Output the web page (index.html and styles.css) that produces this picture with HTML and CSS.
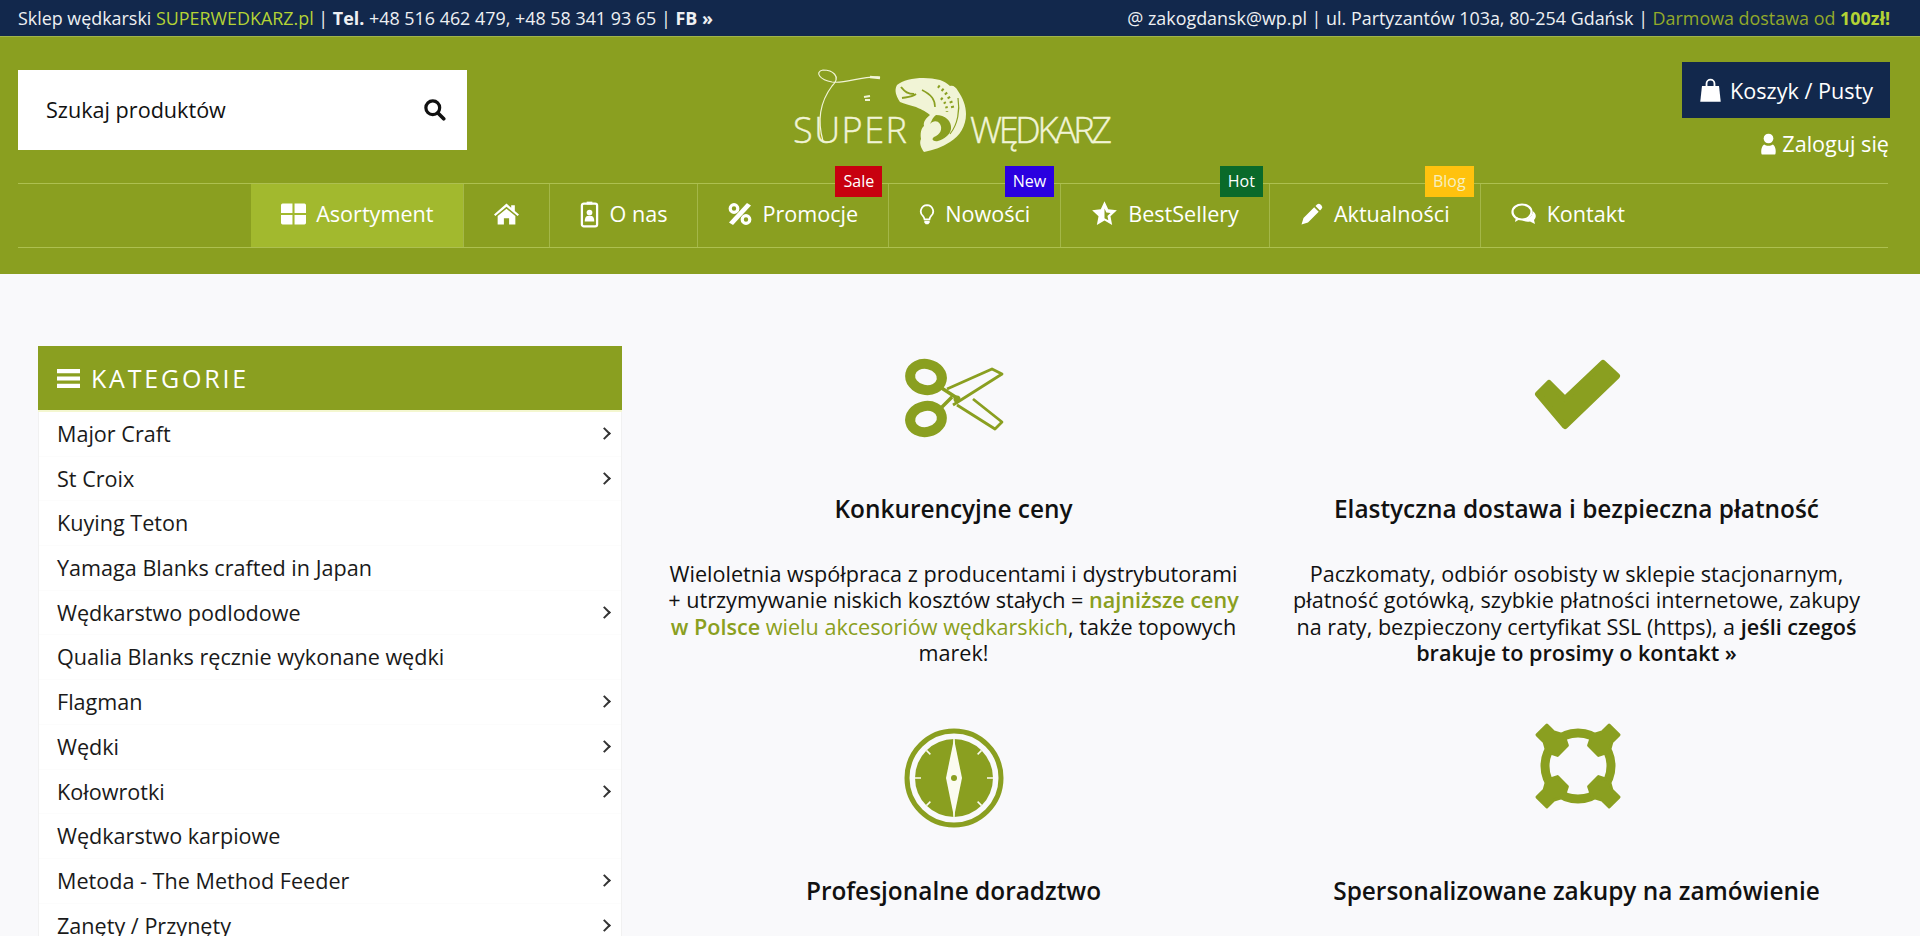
FILE: index.html
```html
<!DOCTYPE html>
<html lang="pl">
<head>
    <meta charset="UTF-8">
    <meta name="viewport" content="width=device-width, initial-scale=1.0">
    <title>Sklep wędkarski SUPERWEDKARZ.pl</title>
    <link rel="stylesheet" href="styles.css">
</head>
<body>
    <div class="topbar">
        <div>Sklep wędkarski <span class="top-green">SUPERWEDKARZ.pl</span> | <b>Tel.</b> +48 516 462 479, +48 58 341 93 65 | <b>FB »</b></div>
        <div>@ zakogdansk@wp.pl | ul. Partyzantów 103a, 80-254 Gdańsk | <span class="top-olive">Darmowa dostawa od</span> <span class="top-green"><b>100zł!</b></span></div>
    </div>

    <header class="header">
        <div class="header-top">
            <div class="search">
                <span>Szukaj produktów</span>
                <svg class="search-icon" viewBox="0 0 20 20"><circle cx="8.5" cy="8.5" r="6" fill="none" stroke="#111" stroke-width="2.8"/><path d="M13 13l5 5" stroke="#111" stroke-width="3.2" stroke-linecap="round"/></svg>
            </div>

            <svg class="logo" viewBox="-2 0 330 90">
                <g fill="none" stroke="#f1f4d6" stroke-width="1.2">
                    <path d="M33 73C27 52 30 34 42 18C52 8 42 2 33 2C24 4 30 12 42 14C56 16 70 8 90 9"/>
                    <path d="M74 29l6 -1M75 32l5 0" stroke-width="2"/>
                    <path d="M80 9l10 1" stroke-width="2.5"/>
                </g>
                <path class="fish" fill-rule="evenodd" d="M107 17C115 10 135 8 150 12C153 13 157 15 160 18C163 17 166 19 168 23C173 30 176 38 176 46C176 58 170 68 160 74C152 79 144 82 134 84C131 80 129 75 131 71C130 66 131 60 134 58C133 54 136 50 140 47C134 42 130 41 126 39C120 37 114 36 110 34C106 28 104 22 107 17ZM146 47C155 47 162 53 161 61C160 67 154 71 148 73C143 74 141 71 144 69C150 67 153 61 150 56C147 52 143 53 140 56C142 52 143 49 146 47Z"/>
                <g fill="none" stroke="#8a9f20" stroke-width="1.6">
                    <path d="M111 19C115 24 118 26 124 26M112 30C118 29 122 29 126 26" stroke-width="2"/>
                    <path d="M132 22C142 27 145 32 145 39"/>
                    <path d="M168 30C170 42 168 56 160 66" stroke-width="1.200"/>
                    <path d="M148 18C156 24 162 32 163 42" stroke-width="3" stroke-dasharray="2 3"/>
                    <path d="M151 30C155 34 157 38 157 44" stroke-width="2.500" stroke-dasharray="2 3"/>
                </g>
                <text class="logo-text" x="3" y="75" textLength="114">SUPER</text>
                <text class="logo-text" x="180" y="75" textLength="142">WĘDKARZ</text>
            </svg>

            <div class="account">
                <div class="cart">
                    <svg class="cart-icon" viewBox="0 0 20 22"><path d="M2.5 7h15L19 21H1Z" fill="#fff"/><path d="M6.5 9V5a3.5 3.5 0 0 1 7 0v4" fill="none" stroke="#fff" stroke-width="1.6"/></svg>
                    Koszyk / Pusty
                </div>
                <div class="login">
                    <svg class="login-icon" viewBox="0 0 14 20"><circle cx="7" cy="5" r="4.4" fill="#fff"/><path d="M1 19.5C0 19 0 12 3 10.5C5 12 9 12 11 10.5C14 12 14 19 13 19.5Z" fill="#fff"/></svg>
                    Zaloguj się
                </div>
            </div>
        </div>

        <nav class="nav">
            <a class="nav-item active">
                <svg class="nav-icon icon-wide" viewBox="0 0 24 20"><path d="M0 1.5A1.5 1.5 0 0 1 1.5 0H11v9H0ZM13 0h9.5A1.5 1.5 0 0 1 24 1.5V9H13ZM0 11h11v9H1.5A1.5 1.5 0 0 1 0 18.5ZM13 11h11v7.5a1.5 1.5 0 0 1 -1.5 1.5H13Z" fill="#fff"/></svg>
                Asortyment
            </a>
            <a class="nav-item">
                <svg class="nav-icon icon-wide" viewBox="0 0 24 20"><path d="M12 0L16.500 4V1.500H20V7L24 10.500L22.700 12L12 3L1.300 12L0 10.500Z" fill="#fff"/><path d="M12 5L20.500 12V20H14.500V14H9.500V20H3.500V12Z" fill="#fff"/></svg>
            </a>
            <a class="nav-item">
                <svg class="nav-icon icon-narrow" viewBox="0 0 20 28"><rect x="2" y="3" width="16" height="24" rx="2" fill="none" stroke="#fff" stroke-width="2.400"/><path d="M7 1h6v3H7Z" fill="#fff"/><circle cx="10" cy="12.500" r="3" fill="#fff"/><path d="M5 22c0-5 2-6 3-6h4c1 0 3 1 3 6Z" fill="#fff"/></svg>
                O nas
            </a>
            <a class="nav-item">
                <svg class="nav-icon" viewBox="0 0 24 24"><path d="M19 1l4 2.500L5 23l-4-2.500Z" fill="#fff"/><circle cx="6" cy="6.500" r="3.800" fill="none" stroke="#fff" stroke-width="3.200"/><circle cx="18" cy="17.500" r="3.800" fill="none" stroke="#fff" stroke-width="3.200"/></svg>
                Promocje
                <span class="badge badge-sale">Sale</span>
            </a>
            <a class="nav-item">
                <svg class="nav-icon icon-bulb" viewBox="0 0 18 24"><path d="M9 2a7 7 0 0 0 -4.500 12.300C5.800 15.500 6 17 6.200 18H11.800C12 17 12.200 15.500 13.500 14.300A7 7 0 0 0 9 2Z" fill="none" stroke="#fff" stroke-width="2"/><path d="M6 19.500h6v2l-1.500 2h-3l-1.500-2Z" fill="#fff"/></svg>
                Nowości
                <span class="badge badge-new">New</span>
            </a>
            <a class="nav-item">
                <svg class="nav-icon icon-star" viewBox="0 0 24 24"><path d="M12 1l3.300 7.200 7.700.9-5.700 5.300 1.500 7.800L12 18.300 5.200 22.200l1.500-7.800L1 9.100l7.700-.9Z" fill="#fff"/><path d="M12 7.500l1.600 3.700 3.800.4-2.800 2.600.8 3.900-3.400-1.900Z" fill="#8a9f20"/></svg>
                BestSellery
                <span class="badge badge-hot">Hot</span>
            </a>
            <a class="nav-item">
                <svg class="nav-icon" viewBox="0 0 24 24"><path d="M17 2.500a2.500 2.500 0 0 1 3.500 0l1 1a2.500 2.500 0 0 1 0 3.500l-1.500 1.500-4.500-4.500ZM14.200 5.300l4.500 4.500L8 20.500l-6.500 2 2-6.500Z" fill="#fff"/></svg>
                Aktualności
                <span class="badge badge-blog">Blog</span>
            </a>
            <a class="nav-item">
                <svg class="nav-icon icon-chat" viewBox="0 0 26 22"><ellipse cx="11" cy="9" rx="9.500" ry="7.500" fill="none" stroke="#fff" stroke-width="2.200"/><path d="M5 14l-1 5 5-3Z" fill="#fff"/><path d="M21.500 8C25 10 26 14 23 17l1 4-5-2.500C16 19 13 18.500 11 17c5 0 11-3 10.500-9Z" fill="#fff"/></svg>
                Kontakt
            </a>
        </nav>
    </header>

    <main class="main">
        <aside class="sidebar">
            <div class="sidebar-title">
                <svg class="bars" viewBox="0 0 22 20"><path d="M0 1h22v4H0ZM0 8h22v4H0ZM0 15h22v4H0Z" fill="#fff"/></svg>
                KATEGORIE
            </div>
            <ul class="cat-list">
                <li class="has-sub">Major Craft</li>
                <li class="has-sub">St Croix</li>
                <li>Kuying Teton</li>
                <li>Yamaga Blanks crafted in Japan</li>
                <li class="has-sub">Wędkarstwo podlodowe</li>
                <li>Qualia Blanks ręcznie wykonane wędki</li>
                <li class="has-sub">Flagman</li>
                <li class="has-sub">Wędki</li>
                <li class="has-sub">Kołowrotki</li>
                <li>Wędkarstwo karpiowe</li>
                <li class="has-sub">Metoda - The Method Feeder</li>
                <li class="has-sub">Zanęty / Przynęty</li>
            </ul>
        </aside>

        <section class="features">
            <div class="feature">
                <div class="feature-icon">
                    <svg width="100" height="100" viewBox="0 0 100 100">
                        <g fill="none" stroke="#8a9f20">
                            <ellipse cx="22" cy="31" rx="16" ry="13" transform="rotate(12 22 31)" stroke-width="10"/>
                            <ellipse cx="22" cy="73" rx="16" ry="13" transform="rotate(-12 22 73)" stroke-width="10"/>
                            <path d="M36 41L53 52M36 63L48 51" stroke-width="3.500"/>
                            <path d="M43 43L88 23L98 28L49 59M69 53L98 76L91 83L53 59" stroke-width="2.800" stroke-linejoin="round"/>
                        </g>
                        <circle cx="53" cy="53" r="3.500" fill="#8a9f20"/>
                    </svg>
                </div>
                <h3>Konkurencyjne ceny</h3>
                <p>Wieloletnia współpraca z producentami i dystrybutorami + utrzymywanie niskich kosztów stałych = <b class="green">najniższe ceny w Polsce</b> <span class="green">wielu akcesoriów wędkarskich</span>, także topowych marek!</p>
            </div>
            <div class="feature">
                <div class="feature-icon">
                    <svg width="100" height="100" viewBox="0 0 100 100">
                        <path d="M11 48L22 37L38 53L76 17L90 30L38 80Z" fill="#8a9f20" stroke="#8a9f20" stroke-width="6" stroke-linejoin="round"/>
                    </svg>
                </div>
                <h3>Elastyczna dostawa i bezpieczna płatność</h3>
                <p>Paczkomaty, odbiór osobisty w sklepie stacjonarnym, płatność gotówką, szybkie płatności internetowe, zakupy na raty, bezpieczony certyfikat SSL (https), a <b>jeśli czegoś brakuje to prosimy o kontakt »</b></p>
            </div>
            <div class="feature">
                <div class="feature-icon">
                    <svg width="100" height="100" viewBox="0 0 100 100">
                        <circle cx="50" cy="50" r="47" fill="none" stroke="#8a9f20" stroke-width="5"/>
                        <circle cx="50" cy="50" r="39" fill="#8a9f20"/>
                        <path d="M50 11L58 50L50 89L42 50Z" fill="#fbfbf0"/>
                        <circle cx="50" cy="50" r="3" fill="#8a9f20"/>
                        <path d="M50 11v6M50 83v6M11 50h6M83 50h6M22.400 22.400l4 4M73.600 73.600l4 4M77.600 22.400l-4 4M26.400 73.600l-4 4" stroke="#fbfbf0" stroke-width="1.500"/>
                    </svg>
                </div>
                <h3>Profesjonalne doradztwo</h3>
            </div>
            <div class="feature">
                <div class="feature-icon">
                    <svg width="100" height="100" viewBox="0 0 100 100">
                        <g transform="translate(51 38)">
                            <circle r="33" fill="none" stroke="#8a9f20" stroke-width="9"/>
                            <g fill="#8a9f20" stroke="#8a9f20" stroke-width="3" stroke-linejoin="round">
                                <path d="M-7 -51H7V-41L12 -32L7 -22H-7L-12 -32L-7 -41Z" transform="rotate(45)"/>
                                <path d="M-7 -51H7V-41L12 -32L7 -22H-7L-12 -32L-7 -41Z" transform="rotate(135)"/>
                                <path d="M-7 -51H7V-41L12 -32L7 -22H-7L-12 -32L-7 -41Z" transform="rotate(225)"/>
                                <path d="M-7 -51H7V-41L12 -32L7 -22H-7L-12 -32L-7 -41Z" transform="rotate(315)"/>
                            </g>
                        </g>
                    </svg>
                </div>
                <h3>Spersonalizowane zakupy na zamówienie</h3>
            </div>
        </section>
    </main>
</body>
</html>
```

FILE: styles.css
```css
html, body {
    margin: 0;
    height: 100%;
    overflow: hidden;
}

body {
    font-family: "Open Sans", "Liberation Sans", sans-serif;
    background: #f9f9fb;
    color: #111;
}

/* Top bar */
.topbar {
    display: flex;
    justify-content: space-between;
    align-items: center;
    height: 36px;
    padding: 0 30px 0 18px;
    background: #12284c;
    color: #eef0f3;
    font-size: 17.900px;
}

.top-green {
    color: #b4d335;
}

.top-olive {
    color: #93aa2a;
}

/* Header */
.header {
    background: #8a9f20;
    border-top: 1px solid #a0b54a;
    padding: 0 32px 26px 18px;
    color: #fff;
}

.header-top {
    display: grid;
    grid-template-columns: 1fr auto 1fr;
    height: 146px;
}

.search {
    display: flex;
    justify-content: space-between;
    align-items: center;
    box-sizing: border-box;
    width: 449px;
    height: 80px;
    margin-top: 33px;
    padding: 0 21px 2px 28px;
    background: #fff;
    color: #111;
    font-size: 21.600px;
}

.search-icon {
    width: 23px;
    height: 23px;
}

.logo {
    width: 330px;
    height: 90px;
    margin-top: 31px;
}

.logo-text {
    font-size: 36px;
    font-weight: 300;
    fill: #f1f4d6;
    stroke: #f1f4d6;
    stroke-width: 0.4px;
}

.fish {
    fill: #f1f4d6;
}

.account {
    display: flex;
    flex-direction: column;
    align-items: flex-end;
}

.cart {
    display: flex;
    align-items: center;
    justify-content: center;
    gap: 8px;
    width: 208px;
    height: 56px;
    margin: 25px -2px 0 0;
    background: #12284c;
    font-size: 21.600px;
}

.cart-icon {
    width: 23px;
    height: 25px;
}

.login {
    display: flex;
    align-items: center;
    gap: 5px;
    margin: 11px -1px 0 0;
    font-size: 21.600px;
}

.login-icon {
    width: 17px;
    height: 22px;
}

/* Menu */
.nav {
    display: flex;
    justify-content: center;
    height: 63px;
    border-top: 1px solid #adc050;
    border-bottom: 1px solid #adc050;
}

.nav-item {
    position: relative;
    display: flex;
    align-items: center;
    gap: 10px;
    padding: 0 30px 4px;
    border-right: 1px solid #a4b748;
    font-size: 21.600px;
    white-space: nowrap;
}

.nav-item:last-child {
    border-right: none;
}

.nav-item.active {
    background: #a2b92e;
}

.nav-icon {
    width: 24px;
    height: 24px;
}

.icon-wide {
    width: 25px;
}

.icon-narrow {
    width: 19px;
    height: 28px;
}

.icon-bulb {
    width: 16px;
    height: 28px;
}

.icon-star {
    width: 27px;
    height: 27px;
}

.icon-chat {
    width: 26px;
    height: 26px;
}

.badge {
    position: absolute;
    top: -18px;
    right: 6px;
    padding: 0 8px;
    height: 31px;
    line-height: 31px;
    font-size: 16px;
}

.badge-sale {
    background: #c8000f;
}

.badge-new {
    background: #2a00e0;
}

.badge-hot {
    background: #0a6a2a;
}

.badge-blog {
    background: #ffc20e;
    color: #f6f0c0;
}

/* Content */
.main {
    display: flex;
    align-items: flex-start;
    padding: 72px 32px 0 38px;
    gap: 20px;
}

.sidebar {
    flex: none;
    width: 584px;
}

.sidebar-title {
    display: flex;
    align-items: center;
    gap: 11px;
    height: 64px;
    padding-left: 19px;
    background: #8a9f20;
    border-bottom: 2px solid #f4f7d0;
    color: #fff;
    font-size: 25px;
    letter-spacing: 2.800px;
}

.bars {
    width: 23px;
    height: 21px;
}

.cat-list {
    margin: 0;
    padding: 0;
    list-style: none;
    background: #fff;
    border-left: 1px solid #f1f1f1;
    border-right: 1px solid #f1f1f1;
    color: #1a1a1a;
}

.cat-list li {
    position: relative;
    height: 44.700px;
    line-height: 44px;
    padding-left: 18px;
    box-sizing: border-box;
    font-size: 21.600px;
    border-bottom: 1px solid #fcfcfc;
}

.has-sub::after {
    content: "";
    position: absolute;
    top: 17px;
    right: 12px;
    width: 7px;
    height: 7px;
    border-top: 2px solid #333;
    border-right: 2px solid #333;
    transform: rotate(45deg);
}

.features {
    flex: 1;
    display: grid;
    grid-template-columns: 1fr 1fr;
}

.feature {
    padding: 0 20px 61px;
    text-align: center;
}

.feature-icon {
    display: flex;
    justify-content: center;
    height: 100px;
}

.feature-icon svg {
    overflow: visible;
}

.feature h3 {
    margin: 49px 0 38px;
    font-size: 24.400px;
    line-height: 28px;
    font-weight: 600;
}

.feature p {
    margin: 0;
    font-size: 21.600px;
    line-height: 26.400px;
}

.feature p b {
    font-weight: 600;
}

.green {
    color: #8a9f20;
}
```
